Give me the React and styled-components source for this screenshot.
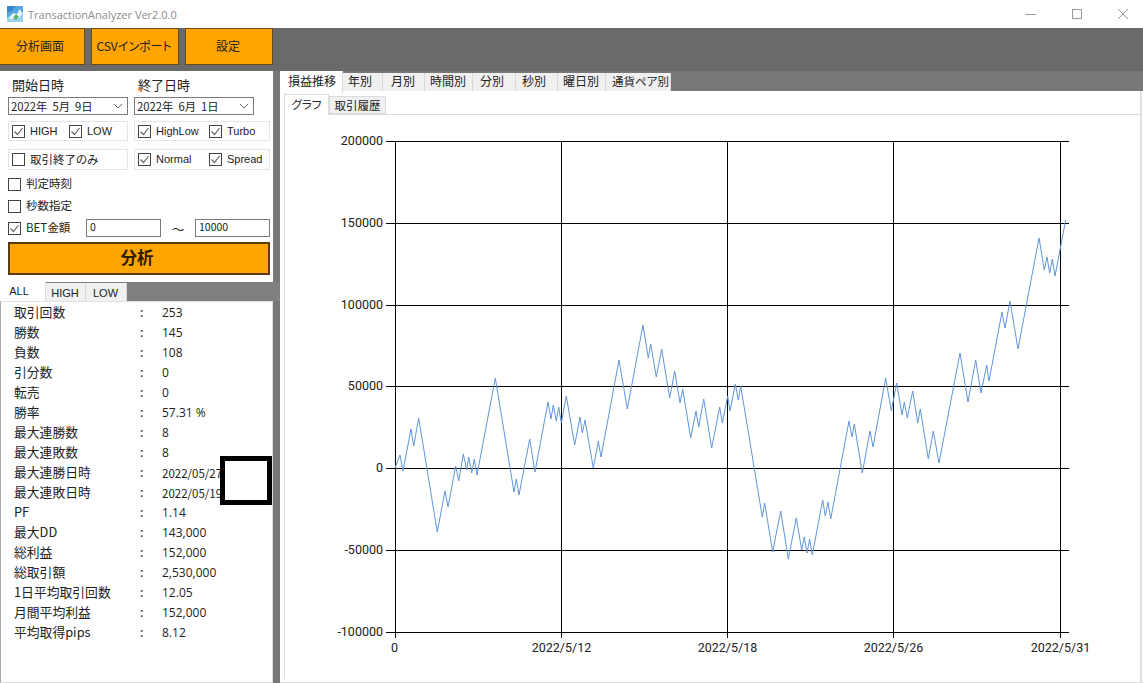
import React from "react";
import styled, { createGlobalStyle } from "styled-components";

const GlobalStyle = createGlobalStyle`
  html, body {
    margin: 0;
    padding: 0;
    background: #fff;
    overflow: hidden;
  }
  * {
    box-sizing: border-box;
  }
`;

const uiFont = `"Noto Sans CJK JP", "Noto Sans", sans-serif`;
const latinFont = `"Liberation Sans", Arial, sans-serif`;

const Window = styled.div`
  width: 1143px;
  height: 683px;
  display: flex;
  flex-direction: column;
  overflow: hidden;
  position: relative;
  font-family: ${uiFont};
  font-feature-settings: "palt";
  color: #222;
  background: #fff;
`;

const TitleBar = styled.div`
  height: 28px;
  flex: none;
  display: flex;
  align-items: center;
  padding-left: 7px;
  margin-right: -3px;
  background: #fff;
`;

const TitleText = styled.span`
  margin-left: 5px;
  font: 11px "Open Sans", sans-serif;
  color: #8c8c8c;
  flex: 1;
`;

const WindowButton = styled.div`
  width: 46px;
  height: 28px;
  display: flex;
  align-items: center;
  justify-content: center;
`;

const Toolbar = styled.div`
  height: 43px;
  flex: none;
  display: flex;
  gap: 6px;
  margin-left: -3px;
  padding-bottom: 6px;
  background: #6a6a6a;
`;

const ToolButton = styled.div`
  width: 88px;
  display: flex;
  align-items: center;
  justify-content: center;
  padding: 0 2px 3px 0;
  background: #ffa500;
  border: 1px solid #6b4a14;
  font-size: 12px;
`;

const Main = styled.div`
  flex: 1;
  display: flex;
  min-height: 0;
  background: #787878;
`;

const LeftColumn = styled.div`
  width: 280px;
  flex: none;
  display: flex;
  flex-direction: column;
`;

const FormPanel = styled.div`
  width: 273px;
  height: 211px;
  flex: none;
  padding: 6px 0 0 8px;
  background: #fff;
  display: flex;
  flex-direction: column;
`;

const FieldRow = styled.div`
  display: grid;
  grid-template-columns: 120px ${(p) => p.$second || "120px"};
  column-gap: 6px;
`;

const FieldLabel = styled.div`
  height: 20px;
  padding-left: 4px;
  font-size: 13px;
  line-height: 16px;
`;

const DateBox = styled.div`
  height: 18px;
  display: flex;
  align-items: center;
  justify-content: space-between;
  padding: 0 3px 0 2px;
  border: 1px solid #7a7a7a;
  font-size: 11.3px;
  font-feature-settings: normal;
  white-space: pre;
`;

const CheckGroup = styled.div`
  height: ${(p) => p.$h || 20}px;
  margin-top: ${(p) => p.$mt || 0}px;
  display: flex;
  align-items: center;
  padding-left: 3px;
  border: 1px solid #e4e4e4;
`;

const CheckItem = styled.div`
  width: ${(p) => (p.$w ? `${p.$w}px` : "auto")};
  display: flex;
  align-items: center;
  gap: 5px;
  font-family: ${(p) => (p.$latin ? latinFont : uiFont)};
  font-size: ${(p) => (p.$latin ? 11 : 11.5)}px;
  white-space: nowrap;
`;

const CheckText = styled.span`
  margin-top: ${(p) => (p.$latin ? 0 : -2)}px;
`;

const BoxMark = styled.span`
  width: 13px;
  height: 13px;
  flex: none;
  display: flex;
  align-items: center;
  justify-content: center;
  border: 1px solid #444;
  background: #fff;
`;

const PlainRow = styled.div`
  height: 22px;
  display: flex;
  align-items: center;
  font-size: 12px;
`;

const FirstPlainRow = styled(PlainRow)`
  margin-top: 3px;
`;

const BetLabel = styled.div`
  width: 78px;
`;

const NumberBox = styled.div`
  width: 75px;
  height: 18px;
  padding-left: 3px;
  border: 1px solid #7a7a7a;
  font-size: 10.5px;
  line-height: 13px;
`;

const Tilde = styled.div`
  width: 34px;
  text-align: center;
  font-size: 13px;
`;

const AnalyzeButton = styled.div`
  width: 262px;
  height: 33px;
  margin-top: 3px;
  flex: none;
  display: flex;
  align-items: center;
  justify-content: center;
  padding: 0 4px 3px 0;
  background: #ffa500;
  border: 2px solid #5c3a0a;
  font-size: 16.5px;
  font-weight: 700;
  color: #2e1c00;
`;

const StatsTabs = styled.div`
  height: 19px;
  flex: none;
  display: flex;
  align-items: flex-end;
  background: #7f7f7f;
`;

const StatsTab = styled.div`
  width: ${(p) => p.$w}px;
  height: ${(p) => (p.$active ? 19 : 18)}px;
  display: flex;
  align-items: center;
  justify-content: center;
  padding-right: ${(p) => (p.$active ? 7 : 1)}px;
  padding-top: ${(p) => (p.$active ? 0 : 2)}px;
  padding-bottom: ${(p) => (p.$active ? 2 : 0)}px;
  background: ${(p) => (p.$active ? "#fff" : "#f0f0f0")};
  border-right: 1px solid #d9d9d9;
  font: 11px ${latinFont};
`;

const StatsPanel = styled.div`
  width: 273px;
  flex: 1;
  background: #fff;
  border-left: 1px solid #a8a8a8;
  border-right: 1px solid #dcdcdc;
  border-top: 1px solid #e2e2e2;
  border-bottom: 1px solid #dcdcdc;
`;

const StatRow = styled.div`
  height: 20px;
  display: grid;
  grid-template-columns: 126px 22px 1fr;
  align-items: center;
  padding: 0 0 2px 13px;
  font-size: 12.8px;
  white-space: nowrap;
`;

const StatValue = styled.span`
  margin-top: 2px;
  font-family: ${(p) => (p.$narrow ? uiFont : `"Open Sans", sans-serif`)};
  font-size: ${(p) => (p.$narrow ? 11.5 : 12)}px;
`;

const BlackBox = styled.div`
  position: absolute;
  left: 220px;
  top: 456px;
  width: 52px;
  height: 49px;
  border: 5px solid #000;
  background: #fff;
`;

const RightColumn = styled.div`
  flex: 1;
  min-width: 0;
  display: flex;
  flex-direction: column;
`;

const MainTabs = styled.div`
  height: 20px;
  flex: none;
  display: flex;
  align-items: flex-end;
`;

const MainTab = styled.div`
  width: ${(p) => p.$w}px;
  height: ${(p) => (p.$active ? 21 : 18)}px;
  margin-bottom: ${(p) => (p.$active ? -1 : 0)}px;
  display: flex;
  align-items: center;
  padding: 0 0 3px ${(p) => p.$pad}px;
  background: ${(p) => (p.$active ? "#fff" : "#f0f0f0")};
  border-right: 1px solid #d9d9d9;
  font-size: ${(p) => p.$size || 12}px;
  position: relative;
`;

const MainBody = styled.div`
  flex: 1;
  min-height: 0;
  display: flex;
  flex-direction: column;
  padding: 3px 3px 3px 4px;
  background: #fff;
  border-bottom: 1px solid #dcdcdc;
  box-shadow: inset -1px 0 #fff, inset -3px 0 #e0e0e0;
`;

const SubTabs = styled.div`
  height: 21px;
  flex: none;
  display: flex;
  align-items: flex-end;
  border-bottom: 1px solid #dcdcdc;
`;

const SubTab = styled.div`
  width: ${(p) => p.$w}px;
  height: ${(p) => (p.$active ? 21 : 18)}px;
  margin-bottom: ${(p) => (p.$active ? -1 : 0)}px;
  display: flex;
  align-items: center;
  justify-content: center;
  padding-bottom: ${(p) => (p.$active ? 3 : 1)}px;
  background: ${(p) => (p.$active ? "#fff" : "#f0f0f0")};
  border: 1px solid #dcdcdc;
  border-bottom: ${(p) => (p.$active ? "none" : "1px solid #dcdcdc")};
  font-size: 11.5px;
`;

const ChartArea = styled.div`
  flex: 1;
  min-height: 0;
  border-left: 1px solid #dcdcdc;
`;

const ChartSvg = styled.svg`
  display: block;
`;

const AxisText = styled.text`
  font-family: Roboto, "Open Sans", sans-serif;
  font-size: 12.5px;
  fill: #222;
`;

const stats = [
  ["取引回数", "253"],
  ["勝数", "145"],
  ["負数", "108"],
  ["引分数", "0"],
  ["転売", "0"],
  ["勝率", "57.31 %"],
  ["最大連勝数", "8"],
  ["最大連敗数", "8"],
  ["最大連勝日時", "2022/05/27", true],
  ["最大連敗日時", "2022/05/19", true],
  ["PF", "1.14"],
  ["最大DD", "143,000"],
  ["総利益", "152,000"],
  ["総取引額", "2,530,000"],
  ["1日平均取引回数", "12.05"],
  ["月間平均利益", "152,000"],
  ["平均取得pips", "8.12"],
];

const mainTabs = [
  { label: "損益推移", w: 63, pad: 8, active: true },
  { label: "年別", w: 40, pad: 5 },
  { label: "月別", w: 42, pad: 8 },
  { label: "時間別", w: 48, pad: 5 },
  { label: "分別", w: 43, pad: 7 },
  { label: "秒別", w: 42, pad: 6 },
  { label: "曜日別", w: 48, pad: 5 },
  { label: "通貨ペア別", w: 65, pad: 6, size: 11.5 },
];

const yTicks = [
  [200000, 141.5],
  [150000, 223.5],
  [100000, 305.5],
  [50000, 386.5],
  [0, 468.5],
  [-50000, 550.5],
  [-100000, 632.5],
];

const xTicks = [
  ["0", 394.5],
  ["2022/5/12", 561.5],
  ["2022/5/18", 727.5],
  ["2022/5/26", 893.5],
  ["2022/5/31", 1060.5],
];

const profit = `395,468 400,455 403,471 411,429 413.7,446 418.7,418 437.3,532 445,491 448,507 455.7,466
458.7,481 463.3,454 466.7,470 468.7,457 471.7,473 474.3,459 477,475 495.3,378 514,492 516.3,479 519,495
529.7,439 535,472 548,402 551,419 553.3,405 556.3,421 558.7,407 561.3,423 566.3,396 574.7,445 580,417
582.3,433 585,420 593.3,468 598.3,441 601,457 619,360 627.3,409 643,325 648.3,358 650.7,344 656.3,377
661.7,349 669.7,398 674.7,371 680,403 682.7,389 690.7,438 696,411 698.7,427 703.7,399 711.7,448 719.7,407
722.3,423 727.7,396 730,411 735.3,384 738.3,400 740.7,386 762.3,517 764.7,503 772.7,552 780.7,511 788.3,559
796.3,518 801.7,550 804.3,537 807,553 809.7,539 812.3,555 822.7,500 825.3,516 828,502 830.7,519 849,421
852,437 854.3,424 862.3,473 870,431 873,447 885.7,378 891.3,411 896.7,383 902,415 904.3,402 907.3,418
912.7,391 917.7,423 920.3,409 928.3,459 933.3,431 939,463 960,353 968,402 975.7,360 981,393 986.7,365
989,381 1002,312 1005,328 1010,301 1018,349 1039,238 1044.3,270 1047,257 1049.7,273 1052.3,259 1055,276
1065.7,220`;

const AppIcon = () => (
  <svg width="16" height="16" viewBox="0 0 16 16">
    <rect width="16" height="16" fill="#58a6de" />
    <path d="M0 0 H9 L5 5 L0 7Z" fill="#3c86cf" />
    <path d="M0 12 L5 8 L9 10 L16 5 V16 H0Z" fill="#9ad2ee" />
    <path d="M2 13 L6 7 L10 8 L13 3 L15 8 L11 13Z" fill="#eef7f6" />
    <path d="M6 12 L9 8 L12 11 L9 14Z" fill="#58ad78" />
  </svg>
);

const Check = ({ on }) => (
  <BoxMark>
    {on && (
      <svg width="11" height="11" viewBox="0 0 11 11">
        <path d="M1.5 5.5 L4.5 8.5 L9.5 2" fill="none" stroke="#666" strokeWidth="1.2" />
      </svg>
    )}
  </BoxMark>
);

const Chevron = () => (
  <svg width="12" height="12" viewBox="0 0 12 12">
    <path d="M2 4 L6 8 L10 4" fill="none" stroke="#666" strokeWidth="1" />
  </svg>
);

const Chart = () => (
  <ChartSvg width="855" height="567" viewBox="285 115 855 567">
    {yTicks.map(([label, y]) => (
      <g key={label}>
        <line x1="386" x2="1069" y1={y} y2={y} stroke="#000" />
        <AxisText x="383" y={y + 3.5} textAnchor="end">
          {label}
        </AxisText>
      </g>
    ))}
    {xTicks.map(([label, x]) => (
      <g key={label}>
        <line x1={x < 395 ? 395.5 : x} x2={x < 395 ? 395.5 : x} y1="141" y2="638" stroke="#000" />
        <AxisText x={x} y="652" textAnchor="middle">
          {label}
        </AxisText>
      </g>
    ))}
    <polyline points={profit} fill="none" stroke="#5f96d8" strokeWidth="1" />
  </ChartSvg>
);

export default function App() {
  return (
    <Window>
      <GlobalStyle />
      <TitleBar>
        <AppIcon />
        <TitleText>TransactionAnalyzer Ver2.0.0</TitleText>
        <WindowButton>
          <svg width="12" height="12" viewBox="0 0 12 12">
            <path d="M0.5 6.5 H11" stroke="#999" />
          </svg>
        </WindowButton>
        <WindowButton>
          <svg width="12" height="12" viewBox="0 0 12 12">
            <rect x="1.5" y="1.5" width="9" height="9" fill="none" stroke="#999" />
          </svg>
        </WindowButton>
        <WindowButton>
          <svg width="12" height="12" viewBox="0 0 12 12">
            <path d="M1 1 L11 11 M11 1 L1 11" stroke="#999" />
          </svg>
        </WindowButton>
      </TitleBar>

      <Toolbar>
        <ToolButton>分析画面</ToolButton>
        <ToolButton>CSVインポート</ToolButton>
        <ToolButton>設定</ToolButton>
      </Toolbar>

      <Main>
        <LeftColumn>
          <FormPanel>
            <FieldRow>
              <FieldLabel>開始日時</FieldLabel>
              <FieldLabel>終了日時</FieldLabel>
            </FieldRow>
            <FieldRow>
              <DateBox>
                2022年  5月  9日
                <Chevron />
              </DateBox>
              <DateBox>
                2022年  6月  1日
                <Chevron />
              </DateBox>
            </FieldRow>
            <FieldRow $second="136px">
              <CheckGroup $mt={6}>
                <CheckItem $w={57} $latin>
                  <Check on />
                  <CheckText $latin>HIGH</CheckText>
                </CheckItem>
                <CheckItem $latin>
                  <Check on />
                  <CheckText $latin>LOW</CheckText>
                </CheckItem>
              </CheckGroup>
              <CheckGroup $mt={6}>
                <CheckItem $w={71} $latin>
                  <Check on />
                  <CheckText $latin>HighLow</CheckText>
                </CheckItem>
                <CheckItem $latin>
                  <Check on />
                  <CheckText $latin>Turbo</CheckText>
                </CheckItem>
              </CheckGroup>
            </FieldRow>
            <FieldRow $second="136px">
              <CheckGroup $mt={8} $h={21}>
                <CheckItem>
                  <Check />
                  <CheckText>取引終了のみ</CheckText>
                </CheckItem>
              </CheckGroup>
              <CheckGroup $mt={8} $h={21}>
                <CheckItem $w={71} $latin>
                  <Check on />
                  <CheckText>Normal</CheckText>
                </CheckItem>
                <CheckItem $latin>
                  <Check on />
                  <CheckText>Spread</CheckText>
                </CheckItem>
              </CheckGroup>
            </FieldRow>
            <FirstPlainRow>
              <CheckItem>
                <Check />
                <CheckText>判定時刻</CheckText>
              </CheckItem>
            </FirstPlainRow>
            <PlainRow>
              <CheckItem>
                <Check />
                <CheckText>秒数指定</CheckText>
              </CheckItem>
            </PlainRow>
            <PlainRow>
              <BetLabel>
                <CheckItem>
                  <Check on />
                  <CheckText>BET金額</CheckText>
                </CheckItem>
              </BetLabel>
              <NumberBox>0</NumberBox>
              <Tilde>〜</Tilde>
              <NumberBox>10000</NumberBox>
            </PlainRow>
            <AnalyzeButton>分析</AnalyzeButton>
          </FormPanel>

          <StatsTabs>
            <StatsTab $w={46} $active>
              ALL
            </StatsTab>
            <StatsTab $w={40}>HIGH</StatsTab>
            <StatsTab $w={41}>LOW</StatsTab>
          </StatsTabs>
          <StatsPanel>
            {stats.map(([label, value, narrow]) => (
              <StatRow key={label}>
                <span>{label}</span>
                <span>:</span>
                <StatValue $narrow={narrow}>{value}</StatValue>
              </StatRow>
            ))}
          </StatsPanel>
        </LeftColumn>

        <RightColumn>
          <MainTabs>
            {mainTabs.map((tab) => (
              <MainTab key={tab.label} $w={tab.w} $pad={tab.pad} $size={tab.size} $active={tab.active}>
                {tab.label}
              </MainTab>
            ))}
          </MainTabs>
          <MainBody>
            <SubTabs>
              <SubTab $w={45} $active>
                グラフ
              </SubTab>
              <SubTab $w={57}>取引履歴</SubTab>
            </SubTabs>
            <ChartArea>
              <Chart />
            </ChartArea>
          </MainBody>
        </RightColumn>
      </Main>
      <BlackBox />
    </Window>
  );
}
